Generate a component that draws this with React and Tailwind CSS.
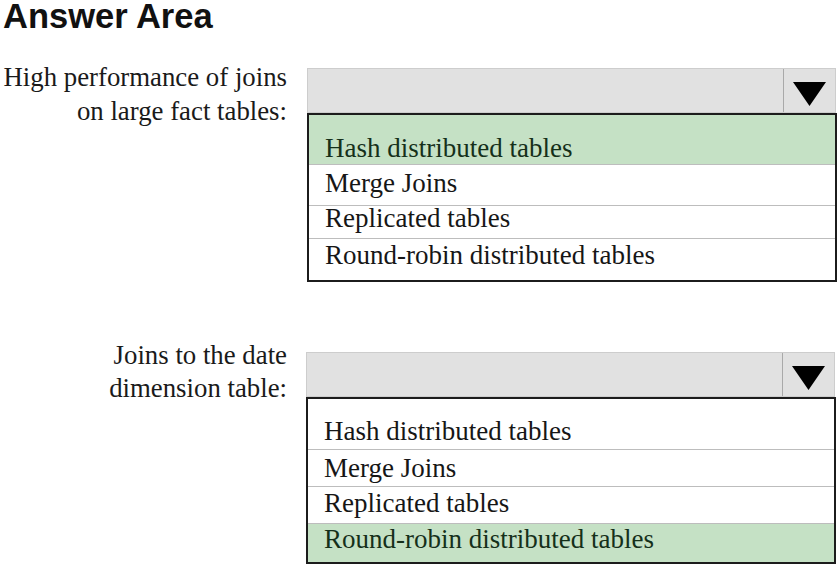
import React from "react";

const serif = { fontFamily: '"Liberation Serif", "Times New Roman", serif' };

function Arrow() {
  return (
    <div className="w-[52px] h-full border-l border-[#a9a9a9] flex justify-center pt-[13px]">
      <svg width="33" height="24" viewBox="0 0 33 24">
        <polygon points="0,0 33,0 16.5,24" fill="#000" />
      </svg>
    </div>
  );
}

function Dropdown({ rows }) {
  return (
    <div className="w-[530px]">
      <div className="h-[45px] w-[529px] flex bg-[#e1e1e1] border border-[#cdcdcd]">
        <div className="flex-1" />
        <Arrow />
      </div>
      <div className="border-2 border-[#1c1c1c] bg-white">
        {rows.map((r, i) => (
          <div
            key={i}
            className={
              (i > 0 ? "border-t border-[#bdbdbd] " : "") +
              (r.sel ? "bg-[#c5e1c5] text-[#15301a] " : "bg-white text-[#161616] ")
            }
            style={{ height: r.h, paddingTop: r.pt }}
          >
            <div className="pl-[16px] text-[27px] leading-[20px] whitespace-nowrap" style={serif}>
              {r.t}
            </div>
          </div>
        ))}
      </div>
    </div>
  );
}

export default function App() {
  const rows1 = [
    { t: "Hash distributed tables", h: 49, pt: 23, sel: true },
    { t: "Merge Joins", h: 41, pt: 8 },
    { t: "Replicated tables", h: 33, pt: 2 },
    { t: "Round-robin distributed tables", h: 42, pt: 6 },
  ];
  const rows2 = [
    { t: "Hash distributed tables", h: 50, pt: 22 },
    { t: "Merge Joins", h: 37, pt: 8 },
    { t: "Replicated tables", h: 37, pt: 6 },
    { t: "Round-robin distributed tables", h: 39, pt: 5, sel: true },
  ];
  return (
    <div className="w-[840px] h-[566px] bg-white overflow-hidden relative">
      <div
        className="pl-[3px] text-[34.5px] leading-[32px] font-bold text-[#111]"
        style={{ fontFamily: '"Liberation Sans", Arial, sans-serif' }}
      >
        Answer Area
      </div>
      <div className="flex items-start mt-[28px]">
        <div className="w-[287px] text-right text-[26.8px] leading-[34px] text-[#1a1a1a]" style={serif}>
          <div>High performance of joins</div>
          <div>on large fact tables:</div>
        </div>
        <div className="ml-[20px] mt-[8px]">
          <Dropdown rows={rows1} />
        </div>
      </div>
      <div className="flex items-start mt-[57px]">
        <div className="w-[287px] text-right text-[26.8px] leading-[33px] text-[#1a1a1a]" style={serif}>
          <div>Joins to the date</div>
          <div>dimension table:</div>
        </div>
        <div className="ml-[19px] mt-[13px]">
          <Dropdown rows={rows2} />
        </div>
      </div>
    </div>
  );
}
